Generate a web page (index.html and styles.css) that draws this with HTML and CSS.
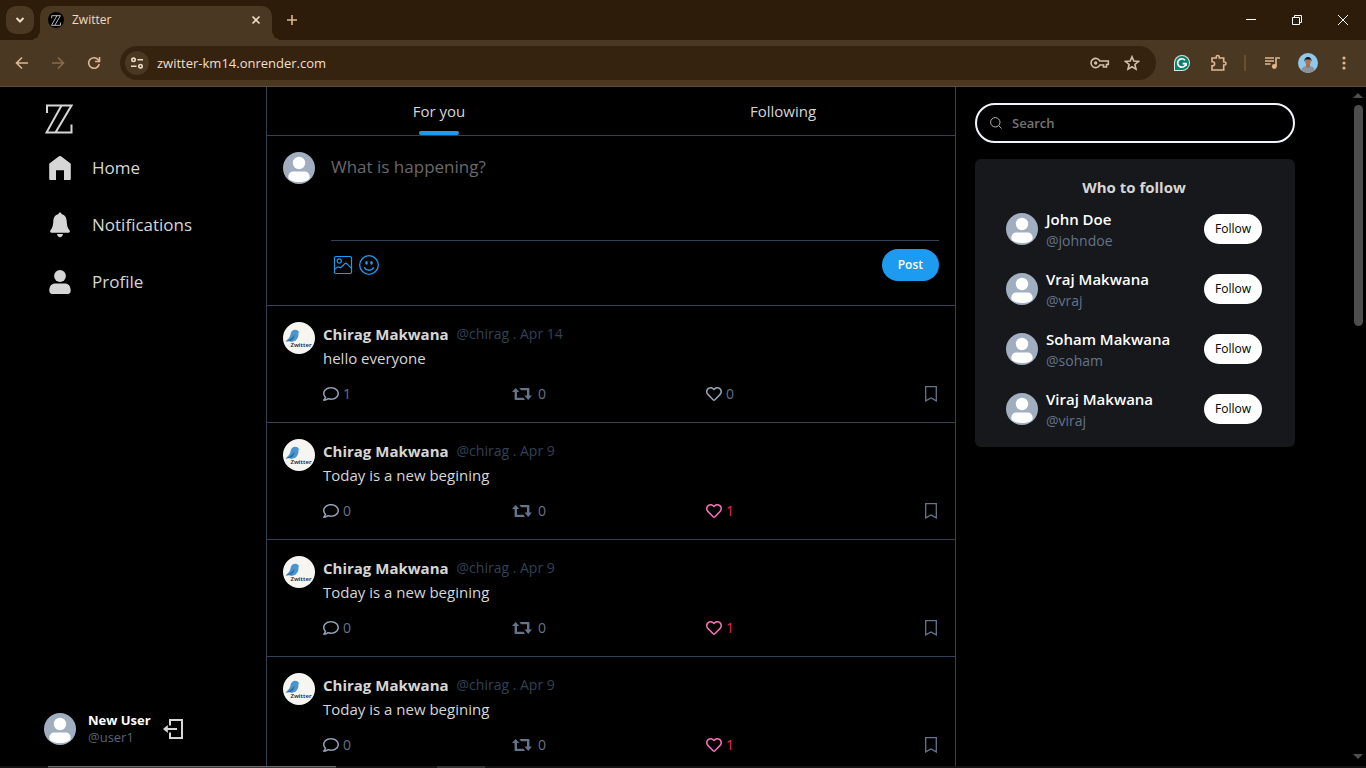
FILE: index.html
```html
<!DOCTYPE html>
<html lang="en">
<head>
<meta charset="utf-8">
<meta name="viewport" content="width=device-width, initial-scale=1">
<title>Zwitter</title>
<link rel="stylesheet" href="styles.css">
</head>
<body>
<svg class="sprite" aria-hidden="true">
  <symbol id="zz" viewBox="0 0 28 30"><path d="M2 9V1.500H26.500L10.500 28.500H26.500V20.500M16.500 1.500L1.500 28.500H10.500" fill="none" stroke="currentColor" stroke-width="2"/></symbol>
  <symbol id="person" viewBox="0 0 32 32"><circle cx="16" cy="16" r="16" fill="#a0aec0"/><circle cx="16" cy="11" r="6.200" fill="#fff"/><path d="M5.300 25c0-3.700 2.200-5.600 5.600-5.600h10.200c3.400 0 5.600 1.900 5.600 5.600 0 3.400-5.100 5-10.700 5s-10.700-1.600-10.700-5z" fill="#fff"/></symbol>
  <symbol id="bird" viewBox="0 0 32 32"><circle cx="16" cy="16" r="16" fill="#f7f5f2"/><path d="M2.500 19.500C5 17 7 15.500 7.500 12.500 7.800 9.500 9.700 7.700 12.300 7.700c1.700 0 2.700.8 3.100 1.800l1.200.7-1.200.6c.5 3.200-.6 6-3 7.900L8.500 20l-2-.8z" fill="#4a94d0"/><path d="M2.500 19.500c3-1.300 7-2.700 8.700-7 .4 3-1.200 5-3.700 6.300z" fill="#28659c"/></symbol>
  <symbol id="comment" viewBox="0 0 512 512"><path fill="currentColor" d="M256 32C114.600 32 0 125.100 0 240c0 47.600 19.900 91.200 52.900 126.300C38 405.700 7 439.100 6.500 439.500c-6.600 7-8.400 17.200-4.600 26S14.400 480 24 480c61.500 0 110-25.700 139.100-46.300C192 442.800 223.200 448 256 448c141.400 0 256-93.100 256-208S397.400 32 256 32zm0 368c-26.700 0-53.100-4.100-78.400-12.100l-22.700-7.200-19.500 13.800c-14.300 10.100-33.900 21.400-57.500 29 7.300-12.100 14.400-25.700 19.900-40.200l10.600-28.100-20.600-21.800C69.700 314.100 48 282.200 48 240c0-88.200 93.300-160 208-160s208 71.800 208 160-93.300 160-208 160z"/></symbol>
  <symbol id="retweet" viewBox="0 0 20 12"><path fill="currentColor" d="M3.700 0L7.200 4H5v5.800h6.500L13 12H3.400a.8.8 0 0 1-.8-.8V4H0zM7.500 0h9.200a.7.700 0 0 1 .7.700V7.500H20L16.200 12l-3.700-4.500H15V2.200H9z"/></symbol>
  <symbol id="heart" viewBox="0 0 512 512"><path fill="currentColor" d="M458.400 64.300C400.600 15.700 311.300 23 256 79.300 200.700 23 111.400 15.600 53.600 64.300-21.600 127.600-10.600 230.800 43 285.500l175.400 178.700c10 10.200 23.400 15.900 37.600 15.900 14.300 0 27.600-5.600 37.600-15.800L469 285.600c53.500-54.700 64.700-157.900-10.600-221.300zm-23.600 187.500L259.400 430.500c-2.400 2.400-4.400 2.400-6.800 0L77.200 251.800c-36.500-37.200-43.900-107.600 7.300-150.700 38.900-32.700 98.900-27.800 136.500 10.500l35 35.700 35-35.700c37.800-38.500 97.800-43.200 136.500-10.600 51.100 43.100 43.500 113.900 7.300 150.800z"/></symbol>
  <symbol id="bookmark" viewBox="0 0 16 16"><path d="M2.700.7h10.600v14.200L8 11.900l-5.300 3z" fill="none" stroke="currentColor" stroke-width="1.300"/></symbol>
</svg>

<header class="tabstrip">
  <button class="tab-search" aria-label="Search tabs"><svg width="12" height="12" viewBox="0 0 12 12"><path d="M2.500 4L6 7.500 9.500 4" class="line thick"/></svg></button>
  <div class="tab">
    <span class="favicon"><svg width="10" height="11"><use href="#zz"/></svg></span>
    <span class="tab-title">Zwitter</span>
    <button class="plain" aria-label="Close tab"><svg width="16" height="16" viewBox="0 0 16 16"><path d="M4.500 4.500l7 7M11.500 4.500l-7 7" class="line"/></svg></button>
  </div>
  <button class="plain new-tab" aria-label="New tab"><svg width="16" height="16" viewBox="0 0 16 16"><path d="M8 3v10M3 8h10" class="line tan"/></svg></button>
  <div class="window-controls">
    <button class="plain" aria-label="Minimize"><svg width="12" height="12" viewBox="0 0 12 12"><path d="M1 5.500h10" class="thin"/></svg></button>
    <button class="plain" aria-label="Restore"><svg width="12" height="12" viewBox="0 0 12 12"><path d="M1.500 3.500h7v7h-7zM3.500 3.500v-2h7v7h-2" class="thin"/></svg></button>
    <button class="plain" aria-label="Close"><svg width="12" height="12" viewBox="0 0 12 12"><path d="M1 1l10 10M11 1L1 11" class="thin"/></svg></button>
  </div>
</header>

<nav class="toolbar" aria-label="Browser">
  <button class="tool" aria-label="Back"><svg width="16" height="16" viewBox="0 0 16 16"><path d="M14 8H3M8 2.500L2.500 8 8 13.500" class="line tan"/></svg></button>
  <button class="tool dim" aria-label="Forward"><svg width="16" height="16" viewBox="0 0 16 16"><path d="M2 8h11M8 2.500L13.500 8 8 13.500" class="line tan"/></svg></button>
  <button class="tool" aria-label="Reload"><svg width="16" height="16" viewBox="0 0 16 16"><path d="M13.200 9A5.300 5.300 0 1 1 12 4.500L13.300 6M13.500 2v4.500H9" class="line tan"/></svg></button>
  <div class="address">
    <button class="site-info" aria-label="Site information"><svg width="14" height="14" viewBox="0 0 14 14"><g class="line"><circle cx="3.500" cy="3.800" r="1.700"/><path d="M7.500 3.800H13M1 10.200h5.500"/><circle cx="10.500" cy="10.200" r="1.700"/></g></svg></button>
    <input class="url" aria-label="Address" value="zwitter-km14.onrender.com">
    <button class="tool small" aria-label="Passwords"><svg width="20" height="14" viewBox="0 0 20 14"><path d="M9.800 5H18.300v3.500H16.500V11h-3V9H9.800A4.600 4.600 0 1 1 9.800 5z" class="line pale"/><circle cx="5.700" cy="7" r="1.700" fill="#d2c0ad"/></svg></button>
    <button class="tool small" aria-label="Bookmark page"><svg width="16" height="16" viewBox="0 0 16 16"><path d="M8 1.800l1.800 4.300 4.600.4-3.500 3 1.100 4.600L8 11.700l-4 2.400 1.100-4.600-3.500-3 4.600-.4z" class="line pale"/></svg></button>
  </div>
  <button class="tool" aria-label="Grammar checker"><svg width="16" height="16" viewBox="0 0 16 16"><path d="M0 16V8a8 8 0 1 1 8 8z" fill="#d6e8e0"/><path d="M1 15V8a7 7 0 1 1 7 7z" fill="#0b806c"/><path d="M11 5.200A4.200 4.200 0 1 0 12 8.600H8.700M12 8.600V11" fill="none" stroke="#fff" stroke-width="1.700"/></svg></button>
  <button class="tool" aria-label="Extensions"><svg width="18" height="18" viewBox="0 0 18 18"><path d="M3 4h4.200V3a1.500 1.500 0 0 1 3 0v1h4.500v4h.8a1.500 1.500 0 0 1 0 3h-.8v5H3v-4.200h.6a2 2 0 0 0 0-4H3z" class="line tan"/></svg></button>
  <span class="divider"></span>
  <button class="tool" aria-label="Media controls"><svg width="16" height="14" viewBox="0 0 16 14"><path d="M1 2h9M1 5h9M1 8h5.500M12 10.500V2h4" class="line tan"/><circle cx="10.300" cy="10.500" r="2.400" fill="#dfb792"/></svg></button>
  <button class="tool" aria-label="Account"><svg width="20" height="20" viewBox="0 0 20 20"><clipPath id="round"><circle cx="10" cy="10" r="10"/></clipPath><g clip-path="url(#round)"><path fill="#8fc8e8" d="M0 0h20v20H0z"/><path fill="#8d919c" d="M3 20c0-5 2-6 5-7h4c3 1 5 2 5 7z"/><path fill="#a06c52" d="M8 10h4v3.500L10 15l-2-1.500z"/><ellipse cx="10" cy="8.300" rx="2.800" ry="3.600" fill="#a87458"/><path fill="#1c1818" d="M6.600 8.500C5.500 2.500 14.500 2.500 13.400 8.500L12.500 6.500h-5z"/></g></svg></button>
  <button class="tool" aria-label="Menu"><svg width="4" height="16" viewBox="0 0 4 16"><g fill="#dfb792"><circle cx="2" cy="3" r="1.600"/><circle cx="2" cy="8" r="1.600"/><circle cx="2" cy="13" r="1.600"/></g></svg></button>
</nav>

<div class="page">
  <aside class="sidebar">
    <a class="logo" href="#" aria-label="Zwitter"><svg width="28" height="30"><use href="#zz"/></svg></a>
    <nav class="menu" aria-label="Main">
      <a href="#home"><svg width="24" height="24" viewBox="0 0 24 24"><path fill="currentColor" d="M12 0l1 .3 9.300 6.900.5.900V23a1 1 0 0 1-1 1H16v-9.700H8V24H2.200a1 1 0 0 1-1-1V8.100l.5-.9L11 .3z"/></svg>Home</a>
      <a href="#notifications"><svg width="24" height="26" viewBox="0 0 24 26"><path fill="currentColor" d="M12 .5c.9 0 1.500.6 1.500 1.500 3.500.8 5 3.600 5.200 7.300.3 5.200 1.200 7 2.800 9 .8 1 .2 2.500-1.100 2.500H3.600c-1.300 0-1.900-1.500-1.100-2.500 1.600-2 2.500-3.800 2.800-9C5.500 5.600 7 2.800 10.500 2c0-.9.600-1.500 1.500-1.500zM9 22h6c-.3 2-1.500 3.200-3 3.200S9.300 24 9 22z"/></svg>Notifications</a>
      <a href="#profile"><svg width="24" height="24" viewBox="0 0 24 24"><circle cx="12" cy="6" r="5.900" fill="currentColor"/><path fill="currentColor" d="M1.300 20.500c0-4.600 2.500-7 6-7h9.400c3.500 0 6 2.400 6 7 0 2.200-1 3.500-3 3.500H4.300c-2 0-3-1.300-3-3.500z"/></svg>Profile</a>
    </nav>
    <div class="account">
      <svg class="avatar"><use href="#person"/></svg>
      <div class="account-text"><strong>New User</strong><span>@user1</span></div>
      <button class="plain logout" aria-label="Log out"><svg width="20" height="20" viewBox="0 0 20 20"><path d="M7 6.500V1h12v18H7v-5.500M4 10h10" fill="none" stroke="currentColor" stroke-width="2"/><path d="M0 10l4.800-4v8z" fill="currentColor"/></svg></button>
    </div>
  </aside>

  <main class="feed">
    <div class="tabs">
      <button class="feed-tab active">For you</button>
      <button class="feed-tab">Following</button>
    </div>
    <form class="composer">
      <svg class="avatar"><use href="#person"/></svg>
      <div class="composer-body">
        <textarea aria-label="New post" placeholder="What is happening?"></textarea>
        <div class="composer-actions">
          <button type="button" class="plain" aria-label="Add image"><svg width="20" height="20" viewBox="0 0 20 20"><g fill="none" stroke="currentColor" stroke-width="1.200"><rect x="1.500" y="1.500" width="17" height="17" rx="1.500"/><circle cx="6.200" cy="6" r="2.100"/><path d="M1.500 14.500c2-2 3.200-3.300 4.200-2.500s1.500 1 2.500.2l3.500-3.400c.8-.8 1.500-.8 2.300 0l4.500 4.600"/></g></svg></button>
          <button type="button" class="plain" aria-label="Add emoji"><svg width="20" height="20" viewBox="0 0 20 20"><circle cx="10" cy="10" r="9.300" fill="none" stroke="currentColor" stroke-width="1.300"/><path d="M5.300 12.300c1.800 3.900 7.600 3.900 9.400 0" fill="none" stroke="currentColor" stroke-width="1.300"/><ellipse cx="7.500" cy="7.900" rx="1.300" ry="1.800" fill="currentColor"/><ellipse cx="12.500" cy="7.900" rx="1.300" ry="1.800" fill="currentColor"/></svg></button>
          <button type="submit" class="post-button">Post</button>
        </div>
      </div>
    </form>

    <article class="post">
      <svg class="avatar" viewBox="0 0 32 32"><use href="#bird"/><text x="18" y="25" class="bird-text">Zwitter</text></svg>
      <div class="post-body">
        <div class="post-head"><strong>Chirag Makwana</strong><span>@chirag . Apr 14</span></div>
        <p>hello everyone</p>
        <div class="post-actions">
          <button class="action"><svg width="16" height="16"><use href="#comment"/></svg>1</button>
          <button class="action wide"><svg width="20" height="12"><use href="#retweet"/></svg>0</button>
          <button class="action"><svg width="16" height="16"><use href="#heart"/></svg>0</button>
          <button class="action" aria-label="Bookmark"><svg width="16" height="16"><use href="#bookmark"/></svg></button>
        </div>
      </div>
    </article>
    <article class="post">
      <svg class="avatar" viewBox="0 0 32 32"><use href="#bird"/><text x="18" y="25" class="bird-text">Zwitter</text></svg>
      <div class="post-body">
        <div class="post-head"><strong>Chirag Makwana</strong><span>@chirag . Apr 9</span></div>
        <p>Today is a new begining</p>
        <div class="post-actions">
          <button class="action"><svg width="16" height="16"><use href="#comment"/></svg>0</button>
          <button class="action wide"><svg width="20" height="12"><use href="#retweet"/></svg>0</button>
          <button class="action liked"><svg width="16" height="16"><use href="#heart"/></svg>1</button>
          <button class="action" aria-label="Bookmark"><svg width="16" height="16"><use href="#bookmark"/></svg></button>
        </div>
      </div>
    </article>
    <article class="post">
      <svg class="avatar" viewBox="0 0 32 32"><use href="#bird"/><text x="18" y="25" class="bird-text">Zwitter</text></svg>
      <div class="post-body">
        <div class="post-head"><strong>Chirag Makwana</strong><span>@chirag . Apr 9</span></div>
        <p>Today is a new begining</p>
        <div class="post-actions">
          <button class="action"><svg width="16" height="16"><use href="#comment"/></svg>0</button>
          <button class="action wide"><svg width="20" height="12"><use href="#retweet"/></svg>0</button>
          <button class="action liked"><svg width="16" height="16"><use href="#heart"/></svg>1</button>
          <button class="action" aria-label="Bookmark"><svg width="16" height="16"><use href="#bookmark"/></svg></button>
        </div>
      </div>
    </article>
    <article class="post">
      <svg class="avatar" viewBox="0 0 32 32"><use href="#bird"/><text x="18" y="25" class="bird-text">Zwitter</text></svg>
      <div class="post-body">
        <div class="post-head"><strong>Chirag Makwana</strong><span>@chirag . Apr 9</span></div>
        <p>Today is a new begining</p>
        <div class="post-actions">
          <button class="action"><svg width="16" height="16"><use href="#comment"/></svg>0</button>
          <button class="action wide"><svg width="20" height="12"><use href="#retweet"/></svg>0</button>
          <button class="action liked"><svg width="16" height="16"><use href="#heart"/></svg>1</button>
          <button class="action" aria-label="Bookmark"><svg width="16" height="16"><use href="#bookmark"/></svg></button>
        </div>
      </div>
    </article>
  </main>

  <aside class="discover">
    <label class="search">
      <svg width="12" height="12" viewBox="0 0 12 12"><path d="M8.700 8.700l2.800 2.800M10 5.300A4.700 4.700 0 1 1 .6 5.300a4.700 4.700 0 0 1 9.400 0z" fill="none" stroke="#b4b4b4"/></svg>
      <input type="search" placeholder="Search" aria-label="Search">
    </label>
    <section class="follow-card">
      <h2>Who to follow</h2>
      <div class="suggestion"><svg class="avatar"><use href="#person"/></svg><div class="who"><strong>John Doe</strong><span>@johndoe</span></div><button class="follow">Follow</button></div>
      <div class="suggestion"><svg class="avatar"><use href="#person"/></svg><div class="who"><strong>Vraj Makwana</strong><span>@vraj</span></div><button class="follow">Follow</button></div>
      <div class="suggestion"><svg class="avatar"><use href="#person"/></svg><div class="who"><strong>Soham Makwana</strong><span>@soham</span></div><button class="follow">Follow</button></div>
      <div class="suggestion"><svg class="avatar"><use href="#person"/></svg><div class="who"><strong>Viraj Makwana</strong><span>@viraj</span></div><button class="follow">Follow</button></div>
    </section>
  </aside>

  <div class="scrollbar" aria-hidden="true">
    <svg width="10" height="5" viewBox="0 0 10 5"><path d="M5 0l5 5H0z" fill="#505050"/></svg>
    <span class="thumb"></span>
    <svg class="down" width="10" height="5" viewBox="0 0 10 5"><path d="M0 0h10L5 5z" fill="#505050"/></svg>
  </div>
</div>
<footer class="taskbar" aria-hidden="true"><span class="task-search"></span><span class="task-active"></span></footer>
</body>
</html>
```

FILE: styles.css
```css
* { box-sizing: border-box; }

body {
  margin: 0;
  height: 100vh;
  display: flex;
  flex-direction: column;
  overflow: hidden;
  background: #000;
  color: #d6d6d6;
  font-family: "Segoe UI", "Open Sans", "Noto Sans", sans-serif;
  font-size: 15px;
  line-height: 24px;
}

button, input, textarea { font: inherit; color: inherit; }
button { cursor: pointer; }
svg { display: block; flex: none; }
.sprite { position: absolute; width: 0; height: 0; }
.bird-text { font: 600 6px "Noto Sans", sans-serif; fill: #1d2a35; text-anchor: middle; }
.avatar { width: 32px; height: 32px; }

.plain, .tool, .site-info, .tab-search, .feed-tab, .action {
  display: flex;
  align-items: center;
  justify-content: center;
  padding: 0;
  border: 0;
  background: none;
}

.line { fill: none; stroke: #f0dcc6; stroke-width: 1.6; }
.thick { stroke-width: 2; }
.tan { stroke: #dfb792; }
.pale { stroke: #d2c0ad; }
.thin { fill: none; stroke: #fff; stroke-width: 1; }

/* Browser frame */
.tabstrip {
  flex: none;
  display: flex;
  height: 40px;
  padding-left: 6px;
  background: #2d1c0a;
}
.tab-search {
  width: 28px;
  height: 28px;
  margin-top: 6px;
  border-radius: 10px;
  background: #4a3822;
}
.tab {
  position: relative;
  display: flex;
  align-items: center;
  gap: 8px;
  width: 232px;
  height: 34px;
  margin: 6px 0 0 6px;
  padding: 0 8px 6px;
  border-radius: 10px 10px 0 0;
  background: #4a3822;
}
.tab::before, .tab::after {
  content: "";
  position: absolute;
  bottom: 0;
  width: 10px;
  height: 10px;
}
.tab::before { right: 100%; background: radial-gradient(circle at 0 0, transparent 10px, #4a3822 10px); }
.tab::after { left: 100%; background: radial-gradient(circle at 100% 0, transparent 10px, #4a3822 10px); }
.favicon {
  display: grid;
  place-items: center;
  width: 16px;
  height: 16px;
  border-radius: 50%;
  background: #000;
  color: #fff;
}
.tab-title { flex: 1; font-size: 12px; line-height: 16px; color: #f0dcc6; }
.new-tab { width: 40px; }
.window-controls { display: flex; margin-left: auto; }
.window-controls .plain { width: 46px; }

.toolbar {
  flex: none;
  display: flex;
  align-items: center;
  height: 47px;
  padding: 0 4px;
  border-bottom: 1px solid #5d4e3b;
  background: #4a3822;
}
.tool { width: 36px; height: 34px; }
.tool.small { width: 32px; }
.dim { opacity: 0.4; }
.address {
  flex: 1;
  display: flex;
  align-items: center;
  height: 34px;
  margin: 0 8px;
  padding: 0 8px 0 5px;
  border-radius: 17px;
  background: #35230f;
}
.site-info { width: 24px; height: 24px; border-radius: 50%; background: #4a3822; }
.url {
  flex: 1;
  min-width: 0;
  padding: 0 8px;
  border: 0;
  background: none;
  color: #f3dfca;
  font-size: 13px;
}
.divider { width: 2px; height: 16px; margin: 0 8px; background: #66502f; }

/* Page */
.page {
  flex: 1;
  min-height: 0;
  display: grid;
  grid-template-columns: 266fr 690fr 394fr 16px;
  overflow: hidden;
}
.page > * { min-width: 0; min-height: 0; }
.page a { color: inherit; text-decoration: none; }

.sidebar { display: flex; flex-direction: column; padding: 17px 16px 20px 44px; }
.logo { color: #fff; padding-left: 1px; }
.menu { display: flex; flex-direction: column; margin-top: 5px; font-size: 17px; }
.menu a { display: flex; align-items: center; gap: 20px; height: 57px; padding-left: 4px; }
.account { display: flex; align-items: center; gap: 12px; margin-top: auto; font-size: 13px; line-height: 17px; }
.account-text { display: flex; flex-direction: column; }
.account strong { color: #fff; }
.account span { color: #5b6270; }

.feed { border: solid #334155; border-width: 0 1px; overflow: hidden; }
.tabs { display: grid; grid-template-columns: 1fr 1fr; height: 49px; border-bottom: 1px solid #334155; }
.feed-tab { position: relative; }
.active::after {
  content: "";
  position: absolute;
  bottom: 0;
  left: calc(50% - 20px);
  width: 40px;
  height: 4px;
  border-radius: 2px;
  background: #1d9bf0;
}
.composer { display: flex; gap: 16px; padding: 16px 16px 24px; border-bottom: 1px solid #334155; }
.composer-body { flex: 1; }
.composer textarea {
  display: block;
  width: 100%;
  height: 89px;
  padding: 0;
  border: 0;
  border-bottom: 1px solid #334155;
  outline: 0;
  resize: none;
  background: none;
  font-size: 17px;
  line-height: 30px;
}
.composer textarea::placeholder { color: #696969; }
.composer-actions { display: flex; align-items: center; gap: 6px; margin-top: 8px; padding-left: 2px; color: #1d9bf0; }
.post-button {
  height: 32px;
  margin-left: auto;
  padding: 0 16px;
  border: 0;
  border-radius: 16px;
  background: #1d9bf0;
  color: #fff;
  font-size: 12px;
  font-weight: 600;
}

.post { display: flex; gap: 8px; padding: 16px; border-bottom: 1px solid #334155; }
.post-body { flex: 1; }
.post-head { display: flex; gap: 8px; }
.post-head span { color: #334155; font-size: 14px; }
.post p { margin: 0; }
.post-actions {
  display: grid;
  grid-template-columns: 189fr 194fr 217fr 16px;
  margin-top: 12px;
  color: #64748b;
  font-size: 14px;
}
.action { justify-content: flex-start; gap: 4px; height: 24px; }
.action svg { color: #94a3b8; }
.action:last-child svg, .action.wide svg { color: #64748b; }
.action.wide { gap: 6px; }
.liked { color: #f0245c; }
.action.liked svg { color: #f472b6; }

.discover { padding: 16px 16px 16px 19px; }
.search {
  display: flex;
  align-items: center;
  gap: 10px;
  max-width: 320px;
  height: 40px;
  padding: 0 13px;
  border: 2px solid #f1f5f9;
  border-radius: 20px;
}
.search input {
  flex: 1;
  min-width: 0;
  padding: 0;
  border: 0;
  outline: 0;
  background: none;
  font-size: 13px;
  font-weight: 600;
}
.search input::placeholder { color: #757575; }
.follow-card {
  max-width: 320px;
  margin-top: 16px;
  padding: 16px 33px 8px 31px;
  border-radius: 6px;
  background: #16181c;
}
.follow-card h2 { margin: 0; font-size: 15px; font-weight: 700; text-align: center; }
.suggestion { display: flex; align-items: center; gap: 8px; height: 60px; }
.who { flex: 1; display: flex; flex-direction: column; padding-top: 2px; line-height: 22px; }
.who strong { color: #fff; font-weight: 600; }
.who span { color: #64748b; font-size: 14px; }
.follow {
  height: 30px;
  padding: 0 11px;
  border: 0;
  border-radius: 15px;
  background: #fff;
  color: #000;
  font-size: 12px;
  font-weight: 500;
}

.scrollbar { display: flex; flex-direction: column; align-items: center; padding: 6px 0 7px; }
.thumb { width: 9px; height: 221px; margin-top: 7px; border-radius: 5px; background: #4d4d4d; }
.down { margin-top: auto; }

.taskbar { flex: none; display: flex; height: 2px; padding-left: 48px; background: #171214; }
.task-search { width: 288px; border-top: 1px solid #696969; background: #3a3a3a; }
.task-active { width: 48px; margin-left: 101px; background: #333; }
```
